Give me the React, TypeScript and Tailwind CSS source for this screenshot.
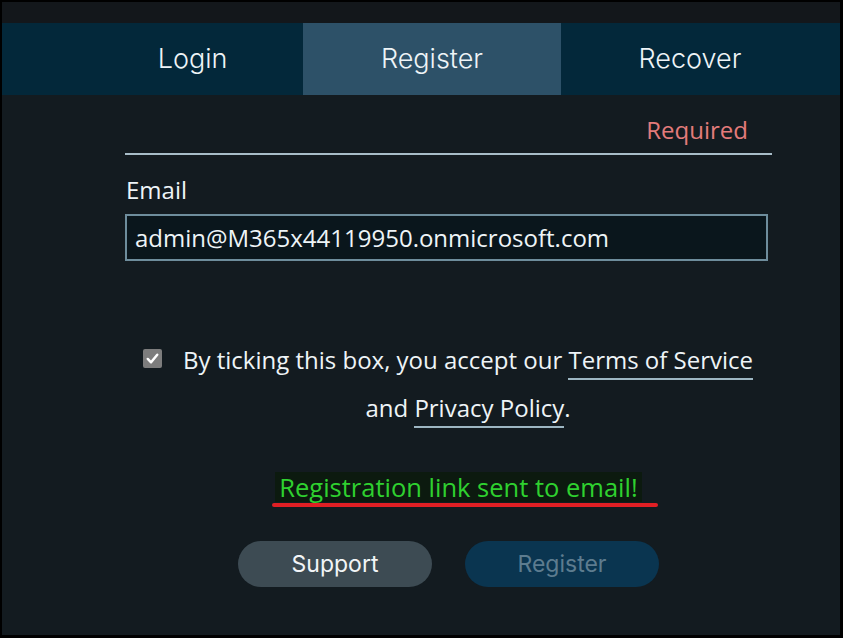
import React from "react";

export default function App() {
  return (
    <div className="w-[843px] h-[638px] bg-black pt-[2px] pl-[2px] pr-[3px] pb-[3px]" style={{ fontFamily: '"Open Sans", sans-serif' }}>
      <div className="w-full h-full bg-[#131b20] flex flex-col">
        <div className="h-[21px] bg-[#13171b]" />
        <div className="h-[72px] bg-[#03283a] flex pl-[80px] text-[27px] text-[#eef4f7]" style={{ fontFamily: 'Inter, sans-serif', fontWeight: 300 }}>
          <div className="w-[221px] flex items-center justify-center">Login</div>
          <div className="w-[258px] flex items-center justify-center bg-[#2d5168]">Register</div>
          <div className="w-[258px] flex items-center justify-center">Recover</div>
        </div>
        <div className="pl-[123px] w-[770px]">
          <div className="w-[647px]">
            <div className="h-[58px] flex items-end justify-end pr-[24px] pb-[11px] text-[24px] text-[#e37b7b] leading-none">Required</div>
            <div className="h-[2px] bg-[#a8bdc8]" />
            <div className="mt-[23px] text-[24px] leading-none text-[#eef4f7] pl-[1px]">Email</div>
            <div className="mt-[12px] w-[643px] h-[47px] border-2 border-[#6e8d9c] bg-[#0a161c] flex items-center pl-[8px] text-[24px] text-[#eef4f7]">
              admin@M365x44119950.onmicrosoft.com
            </div>
            <div className="mt-[75px] flex items-start pl-[18px]">
              <span className="mt-[13px] w-[19px] h-[19px] bg-[#7d7d7d] rounded-[2px] relative shrink-0">
                <svg viewBox="0 0 20 20" className="absolute inset-0 w-full h-full">
                  <path d="M5 10.5 L8.5 14 L15 6" fill="none" stroke="white" strokeWidth="2.6" strokeLinecap="round" strokeLinejoin="round" />
                </svg>
              </span>
              <div className="ml-[20px] w-[572px] text-center text-[24px] leading-[48px] text-[#eef4f7]">
                By ticking this box, you accept our{" "}
                <span className="border-b-2 border-[#9db6c2] pb-[2px]">Terms of Service</span>
                <br />
                and <span className="border-b-2 border-[#9db6c2] pb-[2px]">Privacy Policy</span>.
              </div>
            </div>
            <div className="mt-[40px] flex flex-col items-center">
              <div className="ml-[20px] px-[4px] bg-[#0c1a0f] text-[25.5px] leading-[30px] text-[#2fd12f]">Registration link sent to email!</div>
              <div className="ml-[32px] mt-[1px] w-[386px] h-[4px] rounded-full bg-[#e01f24]" />
            </div>
            <div className="mt-[34px] flex justify-center gap-[33px] text-[23px]" style={{ fontFamily: 'Inter, sans-serif' }}>
              <div className="w-[194px] h-[46px] rounded-full bg-[#3d4b53] text-[#f2f5f7] flex items-center justify-center">Support</div>
              <div className="w-[194px] h-[46px] rounded-full bg-[#0a3550] text-[#5d7c8f] flex items-center justify-center">Register</div>
            </div>
          </div>
        </div>
      </div>
    </div>
  );
}
